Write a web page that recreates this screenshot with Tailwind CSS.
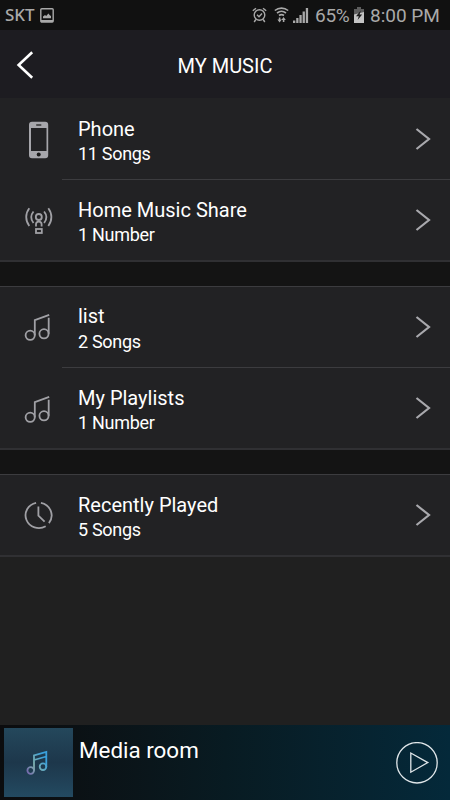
<!DOCTYPE html>
<html lang="en">
<head>
    <meta charset="UTF-8">
    <meta name="viewport" content="width=device-width, initial-scale=1.0">
    <title>My Music</title>
    <script src="https://cdn.jsdelivr.net/npm/@tailwindcss/browser@4"></script>
</head>
<body class="bg-[#141414]">
<svg class="hidden">
    <symbol id="chevron" viewBox="0 0 16 24"><path d="M1.5 2 L14 12 L1.5 22" fill="none" stroke="currentColor" stroke-width="2.2"/></symbol>
    <symbol id="note" viewBox="0 0 28 30">
        <g fill="none" stroke="currentColor" stroke-width="1.8">
            <circle cx="6.2" cy="23.3" r="4.6"/><circle cx="20" cy="21.8" r="4.6"/>
            <path d="M10.8 23.3V8.2L25.2 2.9M24.7 5.8V21.8"/>
        </g>
    </symbol>
</svg>
<div class="flex flex-col w-[450px] h-[800px] overflow-hidden bg-[#202020] text-white font-['Roboto',sans-serif]">
    <!-- status bar -->
    <div class="flex items-center h-[30px] shrink-0 bg-[#111111] text-[#a9a9a9] pl-[5px] pr-[10px]">
        <span class="text-[17px] leading-[30px] font-medium font-['Noto_Sans',sans-serif] w-[31px]">SKT</span>
        <svg class="w-[14px] h-[15px] ml-[4px]" viewBox="0 0 14 15"><rect x=".8" y=".8" width="12.4" height="13.2" rx="1" fill="none" stroke="currentColor" stroke-width="1.4"/><path d="M1 12h12v2H1zM3 10.2V8.6L5 7l1.2 1L8.4 5.6l1.4 1.6 1.2.8v2.2z" fill="currentColor"/></svg>
        <div class="flex items-center ml-auto">
            <svg class="w-[15px] h-[16px]" viewBox="0 0 15 16" fill="none" stroke="currentColor" stroke-width="1.4"><circle cx="7.5" cy="8" r="5.3"/><path d="M5 7.8l2 2 3-3.3M.8 3.8L4 1.2M14.2 3.8L11 1.2M3.8 12.5L2.2 15M11.2 12.5l1.6 2.5"/></svg>
            <svg class="w-[15px] h-[16px] ml-[7px]" viewBox="0 0 15 16" fill="none" stroke="currentColor" stroke-width="1.6"><path d="M.8 3.5c4-3.2 9.4-3.2 13.4 0M3 6c2.8-2.2 6.2-2.2 9 0M5 8.5c1.6-1.2 3.4-1.2 5 0"/><path d="M5.6 10.5v3M9.6 12v3"/><path d="M3.4 12.6h4.4L5.6 15.4zM7.4 13h4.4L9.6 10z" fill="currentColor" stroke="none"/></svg>
            <svg class="w-[16px] h-[16px] ml-[4px]" viewBox="0 0 16 16" fill="currentColor"><path d="M0 13.5h2.3V16H0zM3.2 11h2.3v5H3.2zM6.4 8h2.3v8H6.4zM9.6 4.5h2.3V16H9.6zM12.8 1h2.3v15h-2.3z"/></svg>
            <span class="text-[19px] leading-[30px] tracking-[-0.3px] w-[37px] ml-[6px] pt-[2px]">65%</span>
            <svg class="w-[10px] h-[16px] ml-[2px]" viewBox="0 0 10 16"><path d="M3 0h4v2h3v7H0V2h3z" fill="#5d5d5d"/><path d="M0 7.5L10 5v11H0z" fill="#c4c4c4"/><path d="M6.8 3.5L2 9.2h2.8L3.6 13l4.600-5.500H5.600z" fill="#1a1a1a"/></svg>
            <span class="text-[19px] leading-[30px] w-[70px] ml-[6px] pt-[2px] whitespace-nowrap">8:00 PM</span>
        </div>
    </div>

    <!-- header -->
    <div class="grid grid-cols-[60px_1fr_60px] items-center h-[68px] shrink-0 bg-[#1d1c21]">
        <svg class="w-[18px] h-[28px] ml-[16px] mt-[2px]" viewBox="0 0 18 28"><path d="M16.2 1.2L2.6 14l13.6 12.8" fill="none" stroke="white" stroke-width="2.6"/></svg>
        <h1 class="text-center text-[20px] leading-6 pt-[3px]">MY MUSIC</h1>
    </div>

    <!-- music sources -->
    <div class="shrink-0 bg-[#222224] border-b-2 border-[#303033]">
        <div class="flex h-[81px]">
            <div class="w-[78px] pl-[29px] pt-[23px]">
                <svg class="w-[20px] h-[38px]" viewBox="0 0 20 38"><path fill="#a6a6ab" fill-rule="evenodd" d="M3 .8h13.2a3 3 0 0 1 3 3v30.4a3 3 0 0 1-3 3H3a3 3 0 0 1-3-3V3.8a3 3 0 0 1 3-3zM2 7v23h15.5V7z"/><rect x="7" y="3.2" width="5.5" height="1.5" rx=".7" fill="#333"/><circle cx="9.7" cy="33.5" r="2" fill="#1a1a1a"/></svg>
            </div>
            <div class="flex-1 pt-[19px]">
                <p class="text-[20px] leading-6">Phone</p>
                <p class="text-[18px] tracking-[-0.3px] leading-6 mt-px">11 Songs</p>
            </div>
            <svg class="w-[16px] h-[24px] mt-[29px] mr-[19px] text-[#a9a9ad]"><use href="#chevron"/></svg>
        </div>
        <div class="ml-[62px] h-px bg-[#3c3c3f]"></div>
        <div class="flex h-[80px]">
            <div class="w-[78px] pl-[25px] pt-[27px]">
                <svg class="w-[28px] h-[28px] text-[#a0a0a5]" viewBox="0 0 28 28" fill="none" stroke="currentColor" stroke-width="1.8"><circle cx="13.8" cy="10" r="3"/><path d="M4.3 1.2c-4.1 5.3-4.1 12.5 0 17.8M23.3 1.2c4.1 5.3 4.1 12.5 0 17.8M8.5 4.5c-2.8 3.5-2.8 8 0 11.5M19.1 4.5c2.8 3.5 2.8 8 0 11.5M11 19.5v-2.2c0-3.6 5.6-3.6 5.6 0v2.2"/><rect x="11" y="22" width="5.8" height="4"/></svg>
            </div>
            <div class="flex-1 pt-[18px]">
                <p class="text-[20px] leading-6">Home Music Share</p>
                <p class="text-[18px] tracking-[-0.3px] leading-6 mt-px">1 Number</p>
            </div>
            <svg class="w-[16px] h-[24px] mt-[28px] mr-[19px] text-[#a9a9ad]"><use href="#chevron"/></svg>
        </div>
    </div>

    <div class="h-[24px] shrink-0 bg-[#141414]"></div>

    <!-- playlists -->
    <div class="shrink-0 bg-[#222224] border-t border-b-2 border-t-[#3c3c3f] border-b-[#303033]">
        <div class="flex h-[80px]">
            <div class="w-[78px] pl-[24px] pt-[25px]">
                <svg class="w-[28px] h-[30px] text-[#a0a0a5]"><use href="#note"/></svg>
            </div>
            <div class="flex-1 pt-[17px]">
                <p class="text-[20px] leading-6">list</p>
                <p class="text-[18px] tracking-[-0.3px] leading-6 mt-[2px]">2 Songs</p>
            </div>
            <svg class="w-[16px] h-[24px] mt-[28px] mr-[19px] text-[#a9a9ad]"><use href="#chevron"/></svg>
        </div>
        <div class="ml-[62px] h-px bg-[#3c3c3f]"></div>
        <div class="flex h-[80px]">
            <div class="w-[78px] pl-[24px] pt-[26px]">
                <svg class="w-[28px] h-[30px] text-[#a0a0a5]"><use href="#note"/></svg>
            </div>
            <div class="flex-1 pt-[18px]">
                <p class="text-[20px] leading-6">My Playlists</p>
                <p class="text-[18px] tracking-[-0.3px] leading-6 mt-px">1 Number</p>
            </div>
            <svg class="w-[16px] h-[24px] mt-[28px] mr-[19px] text-[#a9a9ad]"><use href="#chevron"/></svg>
        </div>
    </div>

    <div class="h-[24px] shrink-0 bg-[#141414]"></div>

    <!-- recently played -->
    <div class="shrink-0 bg-[#222224] border-t border-b-2 border-t-[#3c3c3f] border-b-[#303033]">
        <div class="flex h-[80px]">
            <div class="w-[78px] pl-[24px] pt-[26px]">
                <svg class="w-[30px] h-[30px] text-[#a0a0a5]" viewBox="0 0 30 30" fill="none" stroke="currentColor" stroke-width="1.8"><path d="M12.1 1.8A13.3 12.8 0 1 0 21.7 25.3M16.9 1.8A13.3 12.8 0 0 1 24.9 22.1M14.4 5.5v9.2l6.2 6"/></svg>
            </div>
            <div class="flex-1 pt-[18px]">
                <p class="text-[20px] leading-6">Recently Played</p>
                <p class="text-[18px] tracking-[-0.3px] leading-6 mt-px">5 Songs</p>
            </div>
            <svg class="w-[16px] h-[24px] mt-[28px] mr-[19px] text-[#a9a9ad]"><use href="#chevron"/></svg>
        </div>
    </div>

    <!-- now playing -->
    <div class="flex mt-auto h-[75px] shrink-0 bg-linear-to-r from-[#0b0c0e] via-[#081b22] to-[#04293a] pl-[4px] pt-[3px]">
        <div class="w-[69px] h-[69px] bg-linear-to-b from-[#24485c] via-[#1d374b] to-[#234a61] pl-[22px] pt-[22px]">
            <svg class="w-[23px] h-[26px]" viewBox="0 0 23 26">
                <defs>
                    <linearGradient id="note-fill" gradientUnits="userSpaceOnUse" x1="2" y1="24" x2="21" y2="12">
                        <stop offset="0" stop-color="#7467ae"/>
                        <stop offset=".45" stop-color="#7fb0ad"/>
                        <stop offset="1" stop-color="#39a0dc"/>
                    </linearGradient>
                </defs>
                <g fill="none" stroke="url(#note-fill)" stroke-width="1.8"><circle cx="4.7" cy="20.5" r="3.3"/><circle cx="17" cy="16.7" r="3.3"/><path d="M8 20.5V5.5L20.3 2v14.7M8 10l12.3-3.5"/></g>
            </svg>
        </div>
        <p class="flex-1 pl-[6px] pt-[9px] text-[22.4px] leading-[26px]">Media room</p>
        <svg class="w-[42px] h-[42px] mt-[14px] mr-[12px]" viewBox="0 0 42 42" fill="none" stroke="#e0e6e9" stroke-width="1.3"><circle cx="21" cy="20.8" r="20.2"/><path d="M14.8 11v19.2l17-9.6z"/></svg>
    </div>
</div>
</body>
</html>
